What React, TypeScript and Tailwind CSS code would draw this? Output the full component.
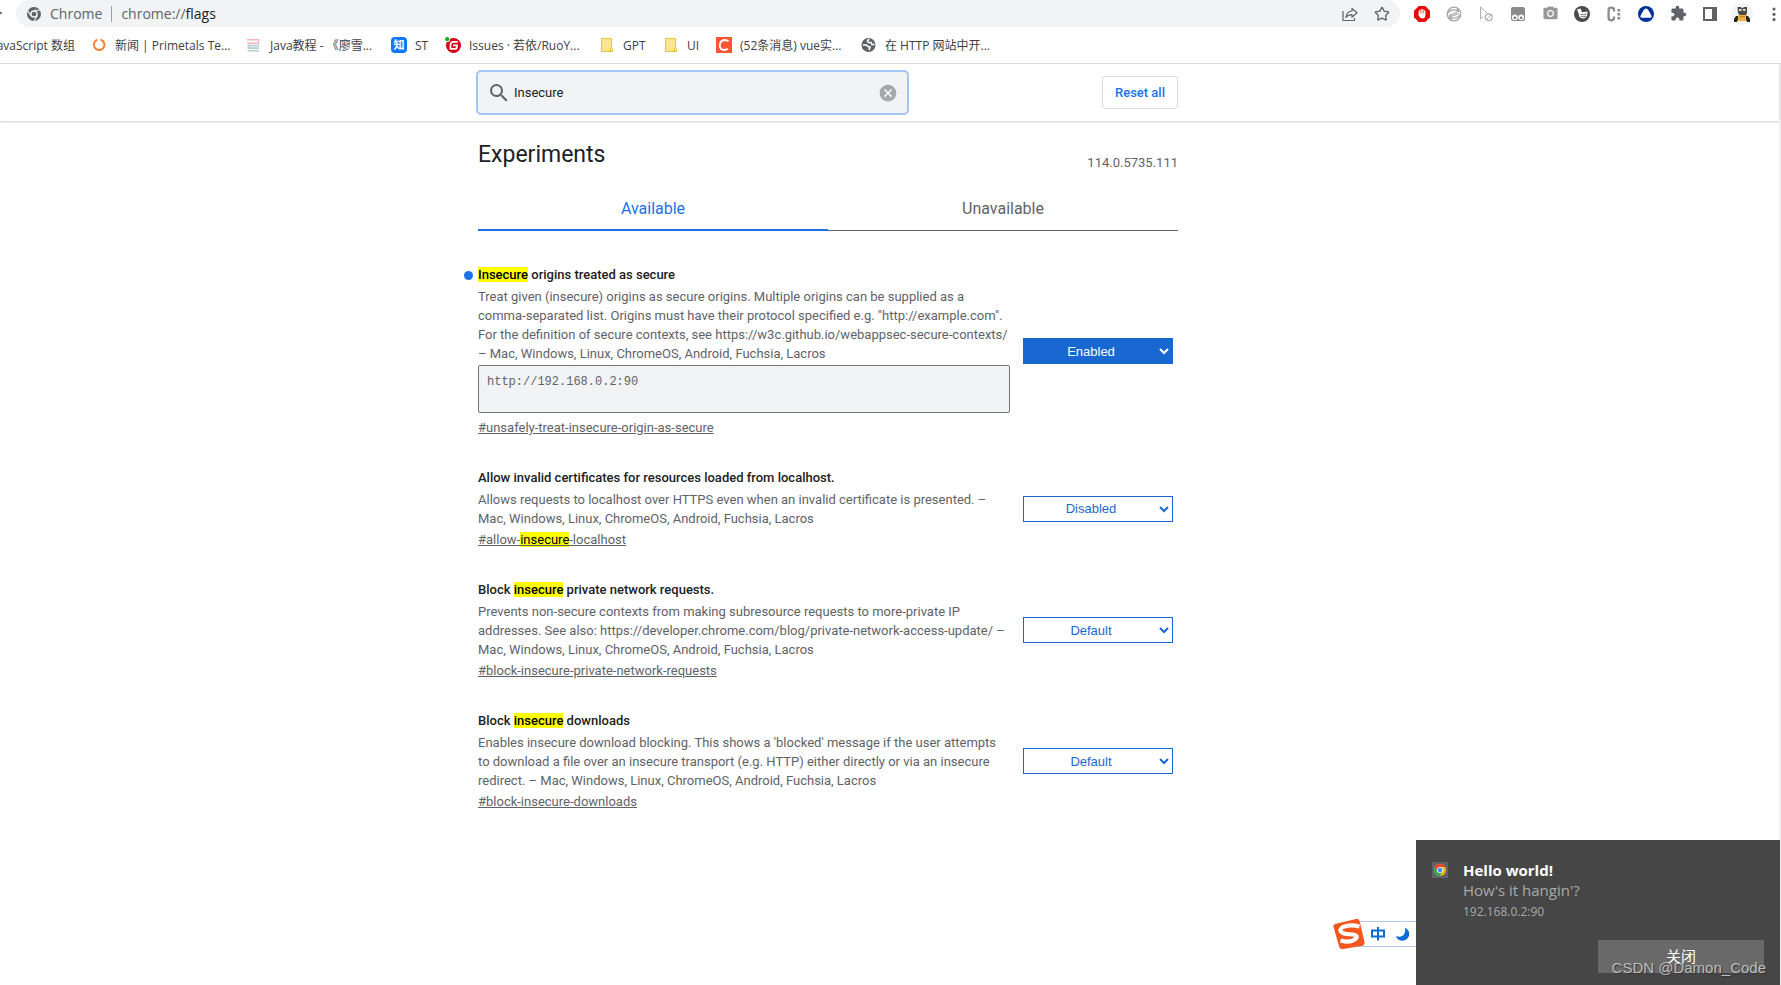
import type { ReactNode } from "react";
import { Star } from "lucide-react";
import { MdCameraAlt, MdCancel, MdExtension, MdSearch } from "react-icons/md";

interface Flag {
  id: string;
  title: string;
  markId?: boolean;
  description: string;
  value: string;
  origins?: string;
}

interface Bookmark {
  label: string;
  width: string;
  icon: ReactNode;
}

const flags: Flag[] = [
  {
    id: "unsafely-treat-insecure-origin-as-secure",
    title: "Insecure origins treated as secure",
    description:
      "Treat given (insecure) origins as secure origins. Multiple origins can be supplied as a comma-separated list. Origins must have their protocol specified e.g. \"http://example.com\". For the definition of secure contexts, see https://w3c.github.io/webappsec-secure-contexts/ – Mac, Windows, Linux, ChromeOS, Android, Fuchsia, Lacros",
    value: "Enabled",
    origins: "http://192.168.0.2:90",
  },
  {
    id: "allow-insecure-localhost",
    title: "Allow invalid certificates for resources loaded from localhost.",
    markId: true,
    description:
      "Allows requests to localhost over HTTPS even when an invalid certificate is presented. – Mac, Windows, Linux, ChromeOS, Android, Fuchsia, Lacros",
    value: "Disabled",
  },
  {
    id: "block-insecure-private-network-requests",
    title: "Block insecure private network requests.",
    description:
      "Prevents non-secure contexts from making subresource requests to more-private IP addresses. See also: https://developer.chrome.com/blog/private-network-access-update/ – Mac, Windows, Linux, ChromeOS, Android, Fuchsia, Lacros",
    value: "Default",
  },
  {
    id: "block-insecure-downloads",
    title: "Block insecure downloads",
    description:
      "Enables insecure download blocking. This shows a 'blocked' message if the user attempts to download a file over an insecure transport (e.g. HTTP) either directly or via an insecure redirect. – Mac, Windows, Linux, ChromeOS, Android, Fuchsia, Lacros",
    value: "Default",
  },
];

function ChromeMono() {
  return (
    <svg viewBox="0 0 16 16" className="size-4 shrink-0" fill="none" stroke="#5f6368">
      <circle cx="8" cy="8" r="5.4" strokeWidth="3.2" />
      <circle cx="8" cy="8" r="2.3" fill="#5f6368" stroke="none" />
      <path d="M8 4.3h6.2M4.8 9.8 1.7 4.6M11.2 9.8 8.1 15" stroke="#f1f3f4" strokeWidth="1.1" />
    </svg>
  );
}

function FolderIcon() {
  return (
    <svg viewBox="0 0 16 16" className="size-4" fill="#ffe591" stroke="#e8c545">
      <path d="M2.5 1.5h10v9l1 1v3h-11z" />
      <path d="M11.5 14.5v-3l1-1" />
    </svg>
  );
}

const bookmarks: Bookmark[] = [
  {
    label: "新闻 | Primetals Te...",
    width: "w-[155px]",
    icon: (
      <svg viewBox="0 0 16 16" className="size-4" fill="none" stroke="#f58233" strokeWidth="2">
        <path d="M6.3 2.8a5.3 5.3 0 1 0 5 .7" />
        <path d="M9.5 2.6a5.3 5.3 0 0 1 3.3 3" />
      </svg>
    ),
  },
  {
    label: "Java教程 - 《廖雪...",
    width: "w-[145px]",
    icon: (
      <svg viewBox="0 0 16 16" className="size-4" fill="none" strokeWidth="1.6">
        <path d="M1 2.8h11.5v3.4H1" stroke="#efb9bd" />
        <path d="M13 8.6H2.5v2.5H13M13 13.8H1.500" stroke="#b5cfd2" />
      </svg>
    ),
  },
  {
    label: "ST",
    width: "w-[54px]",
    icon: (
      <span className="flex size-4 items-center justify-center rounded-sm bg-[#0f77ff] text-[11px] leading-4 font-bold text-white">知</span>
    ),
  },
  {
    label: "Issues · 若依/RuoY...",
    width: "w-[154px]",
    icon: (
      <svg viewBox="0 0 16 16" className="size-4">
        <circle cx="8.5" cy="8.5" r="7.5" fill="#d9001b" />
        <path d="M12.8 4.8H8.5q-3 0-3 2.800v4.200H10q2 0 2-2V8.300H8" fill="none" stroke="#fff" strokeWidth="1.7" />
        <circle cx="2.3" cy="2.3" r="2.8" fill="#fff" />
        <circle cx="2.2" cy="2.2" r="2.1" fill="#0eb40e" />
      </svg>
    ),
  },
  { label: "GPT", width: "w-[64px]", icon: <FolderIcon /> },
  { label: "UI", width: "w-[53px]", icon: <FolderIcon /> },
  {
    label: "(52条消息) vue实...",
    width: "w-[145px]",
    icon: (
      <svg viewBox="0 0 16 16" className="size-4">
        <path d="M0 0h16v16H0z" fill="#fc5531" />
        <path d="M12.5 4.3Q11 3 8.7 3 4 3.300 3.8 8.500 4 13 8.3 13q2 0 3.600-1.200" fill="none" stroke="#fff" strokeWidth="1.9" />
      </svg>
    ),
  },
  {
    label: "在 HTTP 网站中开...",
    width: "w-[140px]",
    icon: (
      <svg viewBox="0 0 16 16" className="size-4">
        <circle cx="7.5" cy="8" r="7" fill="#5f6368" />
        <path d="M2 8h3.500l1.500 1.500 2 .5-1 3M8 2 6.500 4l1 1.500H10l1 2h2.500" fill="none" stroke="#fff" strokeWidth="1.6" />
      </svg>
    ),
  },
];

const extensions: { name: string; icon: ReactNode }[] = [
  {
    name: "AdBlock",
    icon: (
      <svg viewBox="0 0 16 16" className="size-4">
        <path d="M4.7 0h6.600L16 4.700v6.600L11.3 16H4.700L0 11.300V4.700z" fill="#e60c0c" />
        <path d="M5.300 9V5M7.100 8V3.700M8.900 8V3.700M10.700 8.500V5" stroke="#fff" strokeWidth="1.3" strokeLinecap="round" />
        <path d="M4.700 7.500h6.600V9q0 3.500-2.800 3.500Q5.700 12.500 4.700 9z" fill="#fff" />
      </svg>
    ),
  },
  {
    name: "Proxy",
    icon: (
      <svg viewBox="0 0 16 16" className="size-4" fill="none" stroke="#a5a5a5" strokeWidth="1.3">
        <circle cx="8" cy="8" r="6.8" />
        <path d="M1.500 7Q5 2.500 12 4.500M11 2.500l2 2.300-2.500 1.500M14.500 9Q10 13.500 4 11.500M5 9.500l-2 2 2.500 2M3 9.500 11.500 6M5 10.500l8-3" />
      </svg>
    ),
  },
  {
    name: "Selection",
    icon: (
      <svg viewBox="0 0 16 16" className="size-4" fill="none" stroke="#b0b0b0">
        <path d="M2.500 1v12l3-2.500M2.500 1l7 6.500" />
        <circle cx="10.800" cy="11.200" r="3.400" strokeWidth="1.3" />
        <path d="m8.500 13.500 4.600-4.600" />
      </svg>
    ),
  },
  {
    name: "Tampermonkey",
    icon: (
      <svg viewBox="0 0 16 16" className="size-4">
        <path d="M3 1h10q2 0 2 2v10q0 2-2 2H3q-2 0-2-2V3q0-2 2-2" fill="#8a8a8a" />
        <circle cx="4.800" cy="11.300" r="2.900" fill="#fff" />
        <circle cx="11.200" cy="11.300" r="2.900" fill="#fff" />
        <circle cx="4.800" cy="11.800" r="1.300" fill="#777" />
        <circle cx="11.200" cy="11.800" r="1.300" fill="#777" />
      </svg>
    ),
  },
  { name: "Screenshot", icon: <MdCameraAlt className="size-[17px] text-[#999]" /> },
  {
    name: "Reader",
    icon: (
      <svg viewBox="0 0 16 16" className="size-4">
        <circle cx="8" cy="8" r="8" fill="#4a4a4a" />
        <path d="M3 3.500 6.500 2.500 8 6.300l5.500-.8Q14 11.500 9.500 12.500 5 12.500 4.800 8z" fill="#fff" />
        <path d="M6.500 8.500q3 1 6-.8M7 10.500q2.500.8 5-.5" fill="none" stroke="#4a4a4a" strokeWidth=".8" />
      </svg>
    ),
  },
  {
    name: "Console",
    icon: (
      <svg viewBox="0 0 16 16" className="size-4" fill="none" stroke="#8c8c8c">
        <path d="M8 5.500V4q0-2.300-2.700-2.300T2.600 4v8q0 2.300 2.700 2.300T8 12v-1.500" strokeWidth="2.3" />
        <path d="M12.800 3v2.500M12.800 7v2.500M12.800 11v2.500" strokeWidth="2.8" />
      </svg>
    ),
  },
  {
    name: "Drive",
    icon: (
      <svg viewBox="0 0 16 16" className="size-4">
        <circle cx="8" cy="8" r="8" fill="#003399" />
        <path d="M8 2.500q1.400 0 2.300 1.600l2.900 5.100q1.200 2.500-1.200 2.500H4q-2.400 0-1.200-2.500l2.900-5.100Q6.600 2.500 8 2.500" fill="#fff" />
      </svg>
    ),
  },
  { name: "Extensions", icon: <MdExtension className="size-[17px] text-[#5f6368]" /> },
  {
    name: "Side panel",
    icon: (
      <svg viewBox="0 0 16 16" className="size-4" fill="#5f6368">
        <path d="M1 1h14v14H1zM3 3v10h7V3z" fillRule="evenodd" />
      </svg>
    ),
  },
  {
    name: "Profile",
    icon: (
      <svg viewBox="0 0 22 22" className="size-[22px]">
        <circle cx="11" cy="11" r="11" fill="#f3f3f3" />
        <path d="M6.500 4h3.500l1 1.500 2-1.500h3v6l-1 2H8.500l-1.500-2z" fill="#4a4a48" />
        <path d="M8 6h2.500v2H8zM12 6h2.500v2H12z" fill="#ddd" />
        <path d="M7 12h9v6H7z" fill="#f0b440" />
        <path d="M3 19v-3l2-3h2v3l-1 3zM19 19v-3l-2-3h-2v3l1 3z" fill="#26231f" />
        <path d="M8.500 13h5.500v1.500H8.500z" fill="#d08a20" />
      </svg>
    ),
  },
  {
    name: "Menu",
    icon: (
      <svg viewBox="0 0 16 16" className="size-4" fill="#5f6368">
        <circle cx="8" cy="3" r="1.600" />
        <circle cx="8" cy="8.300" r="1.600" />
        <circle cx="8" cy="13.600" r="1.600" />
      </svg>
    ),
  },
];

function Highlight({ text }: { text: string }) {
  return (
    <>
      {text.split(/(insecure)/i).map((part, index) =>
        part.toLowerCase() === "insecure" ? (
          <mark key={index} className="bg-[#ff0] text-black">{part}</mark>
        ) : (
          part
        )
      )}
    </>
  );
}

function FlagRow({ flag }: { flag: Flag }) {
  const enabled = flag.value === "Enabled";
  return (
    <div className="flex items-center justify-between pr-[5px] text-[13px] leading-[19px] text-[#5f6368]">
      <div className="w-[532px]">
        <h3 className="relative mb-[3px] font-medium text-[#202124]">
          {enabled && <span className="absolute top-[6px] -left-[14px] size-[9px] rounded-full bg-[#1a73e8]" />}
          <Highlight text={flag.title} />
        </h3>
        <p>{flag.description}</p>
        {flag.origins && (
          <textarea
            aria-label={flag.title}
            defaultValue={flag.origins}
            className="mt-[2px] mb-[5px] block h-12 w-full resize-none rounded-xs border border-[#767676] bg-[#f1f3f4] px-2 py-[7px] font-['Liberation_Mono',monospace] text-[12px] leading-[18px] text-[#5f6368]"
          />
        )}
        <a href={`#${flag.id}`} className="mt-[2px] block w-fit underline">
          {flag.markId ? <Highlight text={`#${flag.id}`} /> : `#${flag.id}`}
        </a>
      </div>
      <select
        aria-label={flag.title}
        defaultValue={flag.value}
        className={
          enabled
            ? "h-[26px] w-[150px] border border-[#1967d2] bg-[#1967d2] pr-[2px] [text-align-last:center] font-['Liberation_Sans',sans-serif] text-[13px] text-white"
            : "h-[26px] w-[150px] border border-[#1967d2] bg-white pr-[2px] [text-align-last:center] font-['Liberation_Sans',sans-serif] text-[13px] text-[#1967d2]"
        }
      >
        <option>Default</option>
        <option>Enabled</option>
        <option>Disabled</option>
      </select>
    </div>
  );
}

function BrowserBar() {
  return (
    <header className="overflow-hidden border-b border-[#dadce0] font-['Open_Sans','Noto_Sans_CJK_SC',sans-serif]">
      <div className="flex h-[27px] items-center">
        <span className="w-4 shrink-0">
          <svg viewBox="0 0 16 16" className="size-4" fill="#5f6368"><path d="M0 5.500 2.500 7 0 8.500z" /></svg>
        </span>
        <div className="flex h-full flex-1 items-center rounded-[14px] bg-[#f1f3f4] px-[10px] text-[14px] text-[#5f6368]">
          <ChromeMono />
          <span className="ml-2">Chrome</span>
          <span className="mx-[9px] h-4 w-px bg-[#9aa0a6]" />
          <label htmlFor="address">chrome://</label>
          <input
            id="address"
            defaultValue="flags"
            className="min-w-0 flex-1 bg-transparent text-[#202124] outline-none"
          />
          <button aria-label="Share" className="flex w-8 justify-center">
            <svg viewBox="0 0 16 16" className="size-4" fill="none" stroke="#5f6368" strokeWidth="1.2">
              <path d="M1 5v9.500h11.500V12" />
              <path d="M10 2.500V5Q5 5 3.800 11.500 6 8.700 10 8.700v2.500L15 6.800z" strokeLinejoin="round" />
            </svg>
          </button>
          <button aria-label="Bookmark this page" className="-mr-2 flex w-8 justify-center">
            <Star className="size-4 text-[#5f6368]" strokeWidth={2} />
          </button>
        </div>
        <div className="-mr-[9px] ml-[6px] flex shrink-0">
          {extensions.map((extension) => (
            <button key={extension.name} aria-label={extension.name} className="flex w-8 items-center justify-center">
              {extension.icon}
            </button>
          ))}
        </div>
      </div>
      <nav className="flex h-9 items-center text-[12px] whitespace-nowrap text-[#3c4043]">
        <a href="#" className="flex w-[91px] shrink-0 justify-end pt-[2px] pr-4">JavaScript 数组</a>
        {bookmarks.map((bookmark) => (
          <a key={bookmark.label} href="#" className={`flex shrink-0 items-center gap-2 ${bookmark.width}`}>
            <span className="w-4 shrink-0">{bookmark.icon}</span>
            <span className="pt-[2px]">{bookmark.label}</span>
          </a>
        ))}
      </nav>
    </header>
  );
}

function ImeBar() {
  return (
    <div className="fixed right-[365px] bottom-9 flex h-[30px] items-center">
      <svg viewBox="0 0 32 30" className="z-10 h-[30px] w-8">
        <path d="M2 5 23 0q3-.5 3.600 2L31.500 23q.5 3-2 3.700L10 30q-3 .5-3.700-2L.5 8Q0 5.700 2 5" fill="#f4561d" />
        <path d="M26.500 7.500Q17 5 10 8 5 11 9.500 13.800 12 15 20 15.500q5.500 1 3 4Q17.500 24.500 7.500 21.500" fill="none" stroke="#fff" strokeWidth="4.2" />
      </svg>
      <div className="-ml-4 flex h-[26px] w-[67px] items-center gap-[9px] border-y border-[#b3cbe8] bg-white pl-[21px]">
        <svg viewBox="0 0 16 16" className="size-4" fill="none" stroke="#0a6cd6" strokeWidth="2">
          <path d="M2 4.500h12v6H2zM8 1v13.500" />
        </svg>
        <svg viewBox="0 0 16 16" className="size-4" fill="#0a6cd6">
          <path d="M10 1.500q5.500 3 4 8.500-2.500 5.500-8.500 4.500Q2 13.500 1 10q5 2 8-1.500 2-3 1-7" />
        </svg>
      </div>
    </div>
  );
}

function Notification() {
  return (
    <aside className="fixed right-px bottom-0 flex h-[145px] w-[364px] gap-[15px] bg-[#464646] pt-5 pl-4 font-['Open_Sans','Noto_Sans_CJK_SC',sans-serif]">
      <svg viewBox="0 0 16 16" className="mt-[2px] size-4 shrink-0">
        <path d="M0 0h16v16H0z" fill="#5f6368" />
        <circle cx="8" cy="8" r="6" fill="#fbbc04" />
        <path d="M2.800 5A6 6 0 0 1 13.200 5H8L5.400 9.500z" fill="#ea4335" />
        <path d="M2.800 5A6 6 0 0 0 8 14l2.600-4.500H5.400z" fill="#34a853" />
        <circle cx="8" cy="8" r="3" fill="#fff" />
        <circle cx="8" cy="8" r="2.300" fill="#4285f4" />
      </svg>
      <div className="text-[15px] leading-5 text-[#a9a9a9]">
        <p className="font-bold text-white">Hello world!</p>
        <p>How's it hangin'?</p>
        <p className="text-[12px] leading-6">192.168.0.2:90</p>
      </div>
      <button className="absolute right-4 bottom-3 h-[33px] w-[166px] bg-[#696969] text-[15px] text-white">关闭</button>
      <span className="absolute right-[14px] bottom-[7px] font-['Liberation_Sans',sans-serif] text-[15px] leading-5 text-[#bdbdbd] [text-shadow:1px_1px_1px_#333]">
        CSDN @Damon_Code
      </span>
    </aside>
  );
}

export default function App() {
  return (
    <div className="flex min-h-screen flex-col bg-white font-[Roboto,sans-serif]">
      <BrowserBar />
      <div className="flex-1 border-r-2 border-[#f1f1f1]">
        <div className="flex justify-center py-[6px] pr-[123px] shadow-[0_1px_2px_rgba(0,0,0,0.2)]">
          <div className="flex w-[704px] items-center justify-between pr-[2px]">
            <label className="flex h-[45px] w-[433px] items-center rounded-[5px] border-2 border-[#a1c4f9] bg-[#f1f3f4] px-[9px]">
              <MdSearch className="size-6 text-[#5f6368]" />
              <input
                aria-label="Search flags"
                defaultValue="Insecure"
                className="ml-[3px] min-w-0 flex-1 bg-transparent text-[13px] text-[#202124] outline-none"
              />
              <button aria-label="Clear search">
                <MdCancel className="size-5 text-[#a5a8ab]" />
              </button>
            </label>
            <button className="h-[33px] w-[76px] rounded-[3px] border border-[#dadce0] text-[13px] font-medium text-[#1a73e8]">
              Reset all
            </button>
          </div>
        </div>
        <main className="flex justify-center pr-[123px]">
          <div className="w-[700px]">
            <div className="flex items-end justify-between pt-[18px]">
              <h1 className="text-[23px] leading-8 text-[#202124]">Experiments</h1>
              <span className="text-[13px] leading-4 text-[#5f6368]">114.0.5735.111</span>
            </div>
            <div role="tablist" className="mt-[14px] flex h-[46px] items-end text-[16px] leading-5">
              <button role="tab" aria-selected="true" className="h-11 flex-1 border-b-2 border-[#1a73e8] pt-[2px] text-[#1a73e8]">
                Available
              </button>
              <button role="tab" aria-selected="false" className="h-11 flex-1 border-b border-[#5f6368] pt-px text-[#5f6368]">
                Unavailable
              </button>
            </div>
            <div className="flex flex-col gap-[31px] pt-[34px] pb-10">
              {flags.map((flag) => (
                <FlagRow key={flag.id} flag={flag} />
              ))}
            </div>
          </div>
        </main>
      </div>
      <ImeBar />
      <Notification />
    </div>
  );
}
